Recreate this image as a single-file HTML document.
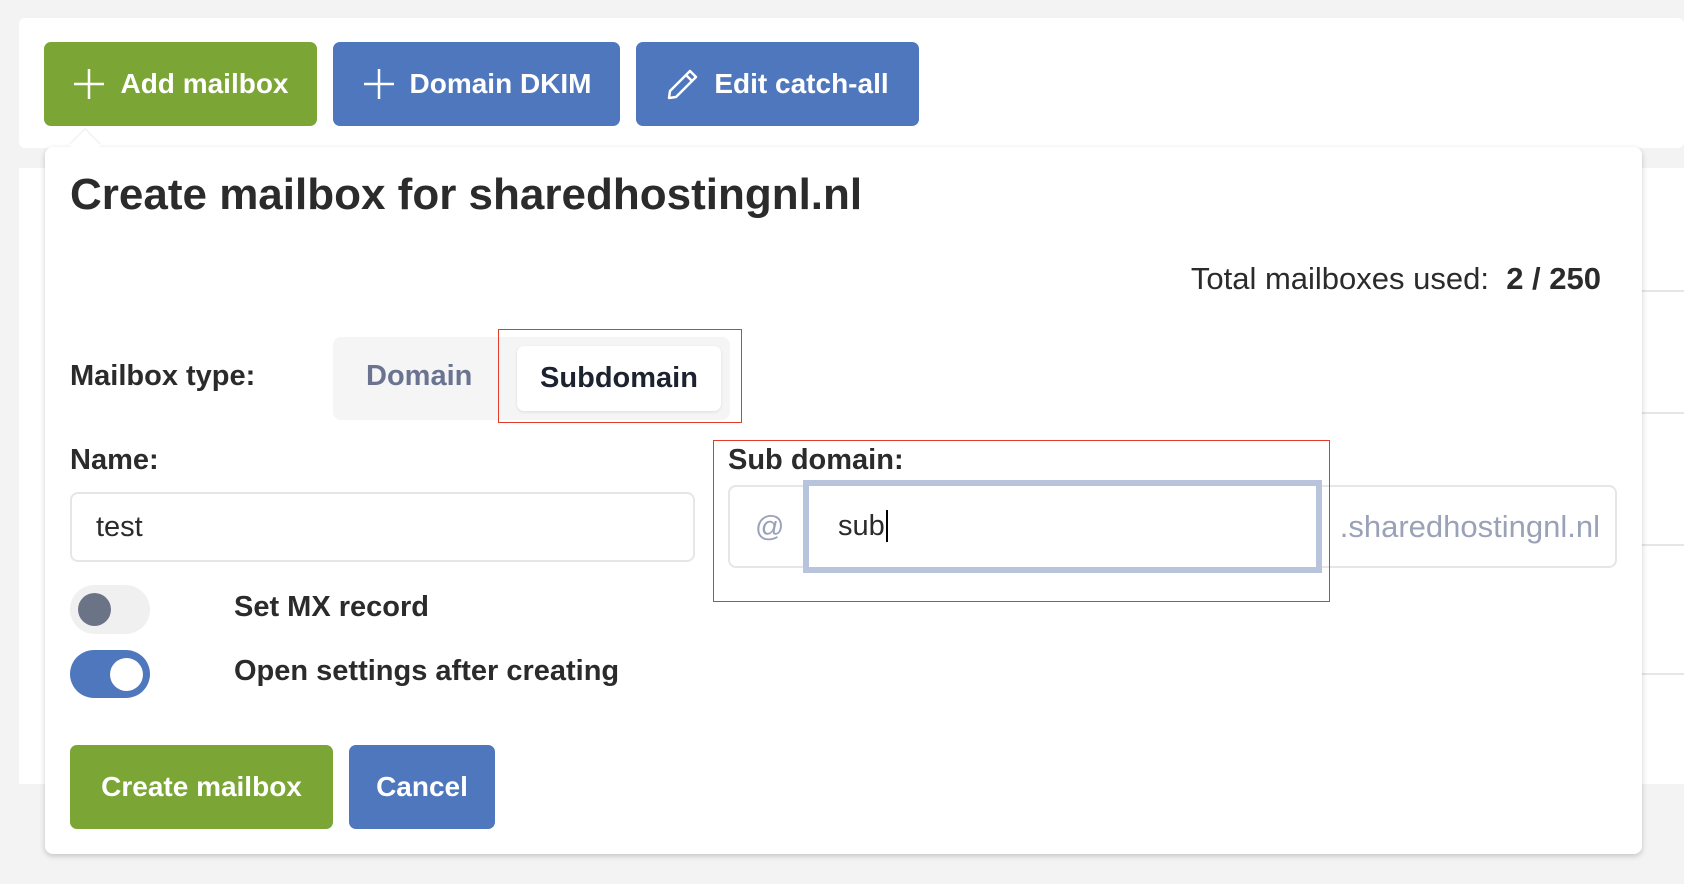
<!DOCTYPE html>
<html><head><style>
*{box-sizing:border-box;margin:0;padding:0}
body{width:1684px;height:884px;background:#f3f3f3;font-family:"Liberation Sans",sans-serif;position:relative;overflow:hidden;color:#2b2b2b}
.a{position:absolute}
.btn{position:absolute;border-radius:7px;color:#fff;font-weight:bold;font-size:28px;display:flex;align-items:center;justify-content:center;gap:14px}
.g{background:#7ba534}.b{background:#4e77bd}
.lbl{position:absolute;font-weight:bold;font-size:29px;color:#2b2b2b;white-space:nowrap}
.line{position:absolute;left:1642px;width:42px;height:2px;background:#e6e6e6}
</style></head><body>
<div class="a" style="left:19px;top:18px;width:1665px;height:130px;background:#fff;border-radius:6px"></div>
<div class="a" style="left:19px;top:168px;width:1665px;height:616px;background:#fff"></div>
<div class="line" style="top:290px"></div><div class="line" style="top:412px"></div><div class="line" style="top:544px"></div><div class="line" style="top:673px"></div>
<div class="btn g" style="left:44px;top:42px;width:273px;height:84px"><svg width="34" height="34" viewBox="0 0 34 34"><path d="M17 2V32M2 17H32" stroke="#fff" stroke-width="2.5"/></svg>Add mailbox</div>
<div class="btn b" style="left:333px;top:42px;width:287px;height:84px"><svg width="34" height="34" viewBox="0 0 34 34"><path d="M17 2V32M2 17H32" stroke="#fff" stroke-width="2.5"/></svg>Domain DKIM</div>
<div class="btn b" style="left:636px;top:42px;width:283px;height:84px"><svg width="34" height="34" viewBox="0 0 34 34"><path d="M24 4L30 10L10 30L3 31L4 24Z M20 8L26 14" stroke="#fff" stroke-width="2.5" fill="none" stroke-linejoin="round"/></svg>Edit catch-all</div>
<div class="a" style="left:45px;top:147px;width:1597px;height:707px;background:#fff;border-radius:8px;box-shadow:0 2px 6px rgba(0,0,0,.2)"></div>
<div class="a" style="left:74px;top:134px;width:22px;height:22px;background:#fff;transform:rotate(45deg);box-shadow:-1px -1px 1px rgba(0,0,0,.08)"></div>
<div class="a" style="left:70px;top:170px;font-size:44px;font-weight:bold;color:#2b2b2b;white-space:nowrap">Create mailbox for sharedhostingnl.nl</div>
<div class="a" style="right:83px;top:261px;font-size:31px;white-space:nowrap">Total mailboxes used:&nbsp; <b>2 / 250</b></div>
<div class="lbl" style="left:70px;top:360px">Mailbox type:</div>
<div class="a" style="left:333px;top:337px;width:397px;height:83px;background:#f5f5f5;border-radius:8px"></div>
<div class="a" style="left:366px;top:360px;font-size:29px;font-weight:bold;color:#6a7390">Domain</div>
<div class="a" style="left:517px;top:346px;width:204px;height:65px;background:#fff;border-radius:7px;box-shadow:0 1px 3px rgba(0,0,0,.1);font-size:29px;font-weight:bold;color:#1d2230;display:flex;align-items:center;justify-content:center">Subdomain</div>
<div class="a" style="left:498px;top:329px;width:244px;height:94px;border:1.5px solid #e23b2c"></div>
<div class="lbl" style="left:70px;top:444px">Name:</div>
<div class="a" style="left:70px;top:492px;width:625px;height:70px;border:2px solid #e6e6e6;border-radius:8px;font-size:29px;padding:17px 0 0 24px">test</div>
<div class="lbl" style="left:728px;top:444px">Sub domain:</div>
<div class="a" style="left:728px;top:485px;width:889px;height:83px;border:2px solid #e6e6e6;border-radius:8px"></div>
<div class="a" style="left:755px;top:511px;font-size:29px;color:#9aa2b8">@</div>
<div class="a" style="left:803px;top:480px;width:519px;height:93px;border:6px solid #b8c4dc;background:#fff;font-size:29px;padding:24px 0 0 29px">sub<span style="border-left:2px solid #000;margin-left:1px"></span></div>
<div class="a" style="right:84px;top:509px;font-size:31px;color:#9aa2b8">.sharedhostingnl.nl</div>
<div class="a" style="left:713px;top:440px;width:617px;height:162px;border:1.5px solid #e23b2c"></div>
<div class="a" style="left:70px;top:585px;width:80px;height:49px;border-radius:25px;background:#f0f0f0"></div>
<div class="a" style="left:78px;top:593px;width:33px;height:33px;border-radius:50%;background:#6b7387"></div>
<div class="lbl" style="left:234px;top:591px">Set MX record</div>
<div class="a" style="left:70px;top:650px;width:80px;height:48px;border-radius:25px;background:#4e77bd"></div>
<div class="a" style="left:110px;top:658px;width:33px;height:33px;border-radius:50%;background:#fff"></div>
<div class="lbl" style="left:234px;top:655px">Open settings after creating</div>
<div class="btn g" style="left:70px;top:745px;width:263px;height:84px">Create mailbox</div>
<div class="btn b" style="left:349px;top:745px;width:146px;height:84px">Cancel</div>
</body></html>
